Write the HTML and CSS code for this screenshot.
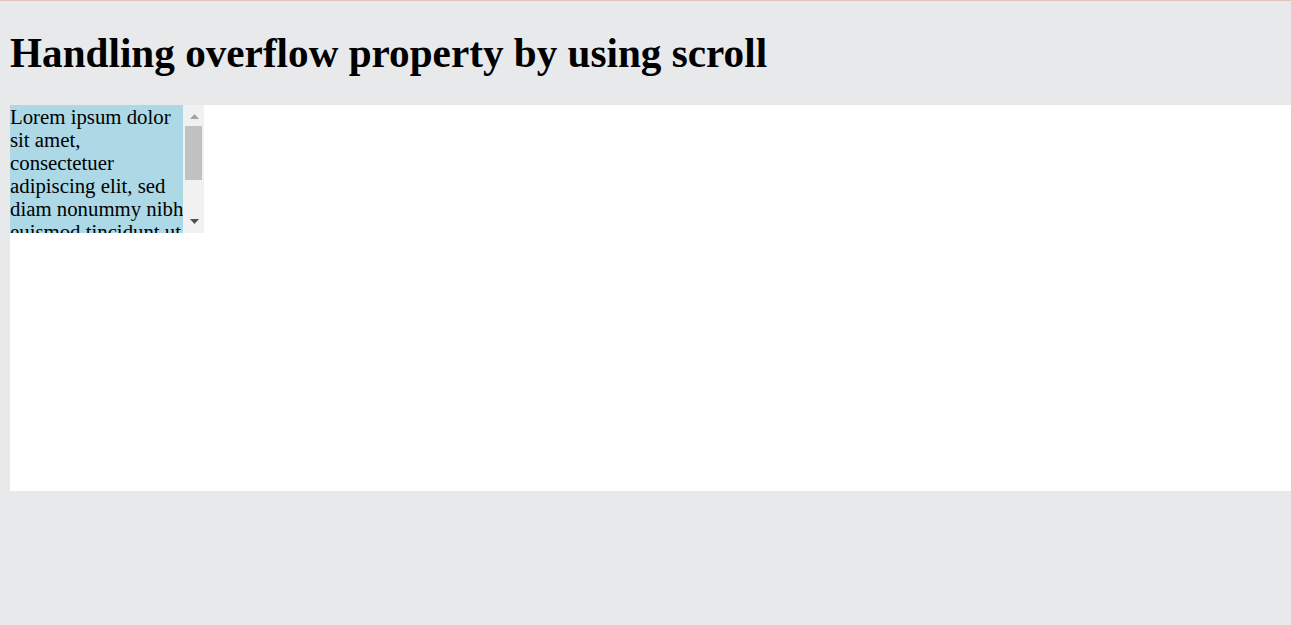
FILE: index.html
```html
<!DOCTYPE html>
<html>
<head>
<meta charset="utf-8">
<link rel="stylesheet" href="styles.css">
</head>
<body>
<h1 class="title">Handling overflow property by using scroll</h1>
<div class="stage">
  <div class="scrollbox">
    <div class="scroll-content">Lorem ipsum dolor<br>sit amet,<br>consectetuer<br>adipiscing elit, sed<br>diam nonummy nibh<br>euismod tincidunt ut<br>laoreet dolore<br>magna aliquam erat<br>volutpat.</div>
    <div class="scrollbar">
      <div class="sb-btn sb-up">
        <svg width="9" height="5" viewBox="0 0 9 5"><polygon points="0,5 9,5 4.5,0" fill="#a3a3a3"/></svg>
      </div>
      <div class="sb-thumb"></div>
      <div class="sb-spacer"></div>
      <div class="sb-btn sb-down">
        <svg width="9" height="5" viewBox="0 0 9 5"><polygon points="0,0 9,0 4.5,5" fill="#505050"/></svg>
      </div>
    </div>
  </div>
</div>
</body>
</html>
```
FILE: styles.css
```css
html, body {
  margin: 0;
  padding: 0;
}
body {
  background: #e8e9eb;
  border-top: 1px solid #e2c3b9;
  padding-left: 10px;
  font-family: "Liberation Serif", "Times New Roman", serif;
  height: 624px;
  overflow: hidden;
}
.title {
  margin: 0;
  padding-top: 29px;
  height: 104px;
  box-sizing: border-box;
  font-size: 41.2px;
  font-weight: bold;
  line-height: 47px;
}
.stage {
  background: #ffffff;
  height: 386px;
}
.scrollbox {
  display: flex;
  width: 194px;
  height: 128px;
}
.scroll-content {
  width: 173px;
  height: 128px;
  overflow: hidden;
  white-space: nowrap;
  background: #add8e6;
  font-size: 20.8px;
  line-height: 23px;
  color: #000;
}
.scrollbar {
  width: 21px;
  background: #f1f1f1;
  display: flex;
  flex-direction: column;
}
.sb-btn {
  display: flex;
  justify-content: center;
}
.sb-btn svg {
  display: block;
  margin-left: 1px;
}
.sb-up {
  height: 21px;
  padding-top: 9px;
  box-sizing: border-box;
}
.sb-thumb {
  height: 54px;
  margin: 0 2px;
  background: #c1c1c1;
}
.sb-spacer {
  flex: 1;
}
.sb-down {
  height: 20px;
  padding-top: 6px;
  box-sizing: border-box;
}
```
